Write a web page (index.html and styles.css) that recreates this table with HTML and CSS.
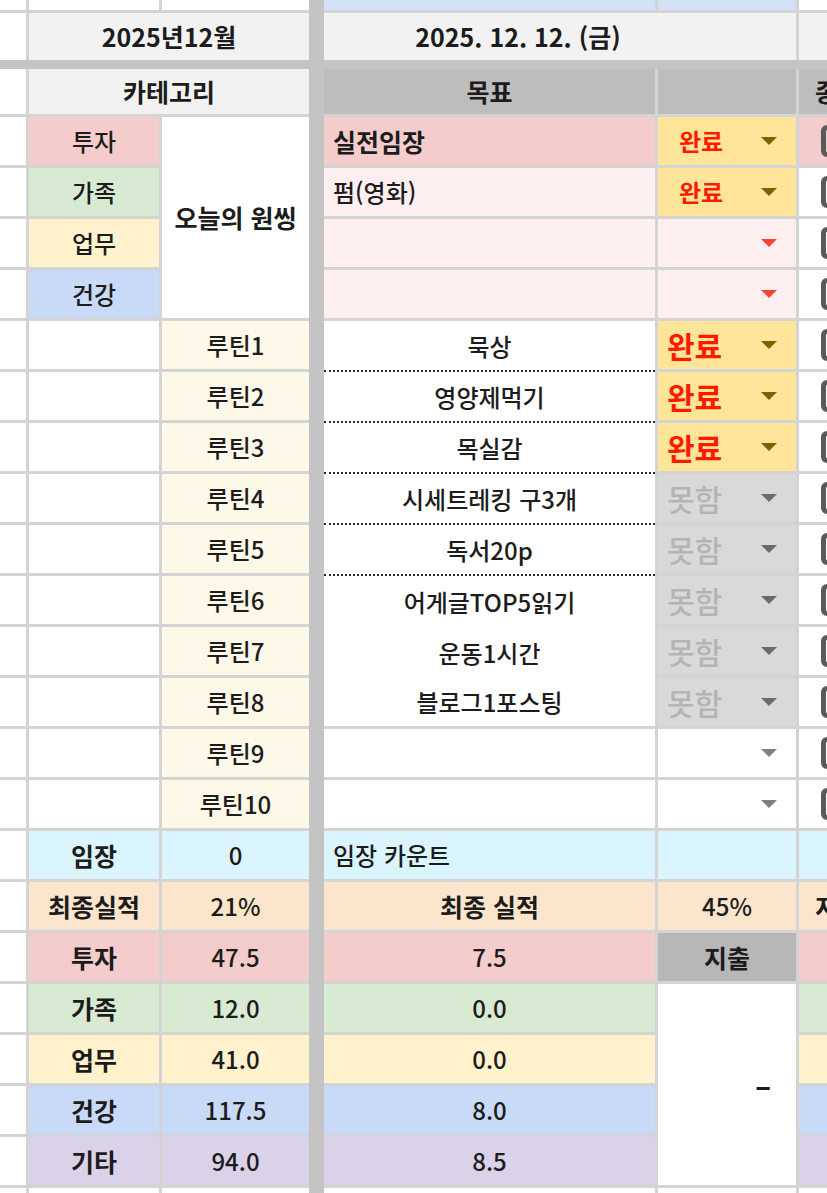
FILE: index.html
```html
<!DOCTYPE html>
<html lang="ko">
<head>
<meta charset="utf-8">
<title>루틴 시트</title>
<link rel="stylesheet" href="styles.css">
</head>
<body>
<div class="sheet">
  <div class="sep"></div>
  <div class="bar"></div>

  <!-- top partial row -->
  <div class="c"></div><div class="c"></div><div class="c"></div>
  <div class="c lblue"></div><div class="c lblue"></div><div class="c"></div>

  <!-- month / date -->
  <div class="c"></div>
  <div class="c hdr span2 b">2025년12월</div>
  <div class="c hdr span2 b date">2025. 12. 12. (금)</div>
  <div class="c hdr"></div>

  <!-- header -->
  <div class="c"></div>
  <div class="c hdr span2 b">카테고리</div>
  <div class="c gray b">목표</div>
  <div class="c gray"></div>
  <div class="c gray b cut">종합</div>

  <!-- one thing -->
  <div class="c"></div>
  <div class="c pink">투자</div>
  <div class="c onething b">오늘의 원씽</div>
  <div class="c pink left b">실전임장</div>
  <div class="c st yel"><span class="done sm">완료</span><span class="arr brown"></span></div>
  <div class="c pink cbcell"><span class="cb"></span></div>

  <div class="c"></div>
  <div class="c green">가족</div>
  <div class="c lpink left">펌(영화)</div>
  <div class="c st yel"><span class="done sm">완료</span><span class="arr brown"></span></div>
  <div class="c cbcell"><span class="cb"></span></div>

  <div class="c"></div>
  <div class="c yellow">업무</div>
  <div class="c lpink"></div>
  <div class="c st lpink empty"><span class="arr red"></span></div>
  <div class="c cbcell"><span class="cb"></span></div>

  <div class="c"></div>
  <div class="c blue">건강</div>
  <div class="c lpink"></div>
  <div class="c st lpink empty"><span class="arr red"></span></div>
  <div class="c cbcell"><span class="cb"></span></div>

  <!-- routines -->
  <div class="c"></div><div class="c"></div>
  <div class="c cream">루틴1</div>
  <div class="c dot">묵상</div>
  <div class="c st yel big"><span class="done">완료</span><span class="arr brown"></span></div>
  <div class="c cbcell"><span class="cb"></span></div>

  <div class="c"></div><div class="c"></div>
  <div class="c cream">루틴2</div>
  <div class="c dot">영양제먹기</div>
  <div class="c st yel big"><span class="done">완료</span><span class="arr brown"></span></div>
  <div class="c cbcell"><span class="cb"></span></div>

  <div class="c"></div><div class="c"></div>
  <div class="c cream">루틴3</div>
  <div class="c dot">목실감</div>
  <div class="c st yel big"><span class="done">완료</span><span class="arr brown"></span></div>
  <div class="c cbcell"><span class="cb"></span></div>

  <div class="c"></div><div class="c"></div>
  <div class="c cream">루틴4</div>
  <div class="c dot">시세트레킹 구3개</div>
  <div class="c st lgray big"><span class="fail">못함</span><span class="arr dgray"></span></div>
  <div class="c cbcell"><span class="cb"></span></div>

  <div class="c"></div><div class="c"></div>
  <div class="c cream">루틴5</div>
  <div class="c dot">독서20p</div>
  <div class="c st lgray big"><span class="fail">못함</span><span class="arr dgray"></span></div>
  <div class="c cbcell"><span class="cb"></span></div>

  <div class="c"></div><div class="c"></div>
  <div class="c cream">루틴6</div>
  <div class="c join">어게글TOP5읽기</div>
  <div class="c st lgray big"><span class="fail">못함</span><span class="arr dgray"></span></div>
  <div class="c cbcell"><span class="cb"></span></div>

  <div class="c"></div><div class="c"></div>
  <div class="c cream">루틴7</div>
  <div class="c join">운동1시간</div>
  <div class="c st lgray big"><span class="fail">못함</span><span class="arr dgray"></span></div>
  <div class="c cbcell"><span class="cb"></span></div>

  <div class="c"></div><div class="c"></div>
  <div class="c cream">루틴8</div>
  <div class="c">블로그1포스팅</div>
  <div class="c st lgray big"><span class="fail">못함</span><span class="arr dgray"></span></div>
  <div class="c cbcell"><span class="cb"></span></div>

  <div class="c"></div><div class="c"></div>
  <div class="c cream">루틴9</div>
  <div class="c"></div>
  <div class="c st empty"><span class="arr mgray"></span></div>
  <div class="c cbcell"><span class="cb"></span></div>

  <div class="c"></div><div class="c"></div>
  <div class="c cream">루틴10</div>
  <div class="c"></div>
  <div class="c st empty"><span class="arr mgray"></span></div>
  <div class="c cbcell"><span class="cb"></span></div>

  <!-- summary -->
  <div class="c"></div>
  <div class="c cyan b">임장</div>
  <div class="c cyan">0</div>
  <div class="c cyan left">임장 카운트</div>
  <div class="c cyan"></div>
  <div class="c cyan"></div>

  <div class="c"></div>
  <div class="c orange b">최종실적</div>
  <div class="c orange">21%</div>
  <div class="c orange b">최종 실적</div>
  <div class="c orange">45%</div>
  <div class="c orange b cut">지출</div>

  <div class="c"></div>
  <div class="c pink b">투자</div>
  <div class="c pink">47.5</div>
  <div class="c pink">7.5</div>
  <div class="c spend b">지출</div>
  <div class="c pink"></div>

  <div class="c"></div>
  <div class="c green b">가족</div>
  <div class="c green">12.0</div>
  <div class="c green">0.0</div>
  <div class="c dash"><span class="dash-t">-</span></div>
  <div class="c green"></div>

  <div class="c"></div>
  <div class="c yellow b">업무</div>
  <div class="c yellow">41.0</div>
  <div class="c yellow">0.0</div>
  <div class="c yellow"></div>

  <div class="c"></div>
  <div class="c blue b">건강</div>
  <div class="c blue">117.5</div>
  <div class="c blue">8.0</div>
  <div class="c blue"></div>

  <div class="c"></div>
  <div class="c purple b">기타</div>
  <div class="c purple">94.0</div>
  <div class="c purple">8.5</div>
  <div class="c purple"></div>

  <!-- bottom partial row -->
  <div class="c"></div><div class="c"></div><div class="c"></div>
  <div class="c"></div><div class="c"></div><div class="c"></div>
</div>
</body>
</html>
```

FILE: styles.css
```css
html, body {
  margin: 0;
  padding: 0;
  background: #ffffff;
  overflow: hidden;
}

body {
  width: 827px;
  height: 1193px;
  font-family: "Noto Sans CJK KR", "Noto Sans", sans-serif;
  color: #1c1c1c;
}

.sheet {
  display: grid;
  grid-template-columns: 26px 130px 147px 9px 331px 138px 100px;
  grid-template-rows: 10px 47px 3px 45px repeat(21, 48px) 30px;
  gap: 3px;
  background: #d4d4d4;
  width: max-content;
  font-size: 24px;
  font-weight: 500;
  line-height: 1;
}

.sep {
  grid-column: 4;
  grid-row: 1 / -1;
  margin: 0 -3px;
  background: #c4c4c4;
}

.bar {
  grid-column: 1 / -1;
  grid-row: 3;
  margin: -3px 0;
  background: #c4c4c4;
}

.c {
  background: #ffffff;
  display: flex;
  align-items: center;
  justify-content: center;
  white-space: nowrap;
  overflow: hidden;
}

.b {
  font-weight: 700;
  font-size: 25px;
}

.span2 { grid-column: span 2; }

.left {
  justify-content: flex-start;
  padding-left: 9px;
}

.date { padding-right: 84px; }

.cut {
  justify-content: flex-start;
  padding-left: 16px;
}

.hdr { background: #f2f2f2; }
.gray { background: #bdbdbd; }
.lblue { background: #d3e1f7; }
.pink { background: #f4cccc; }
.lpink { background: #fdeff0; }
.green { background: #d9ead3; }
.yellow { background: #fff2cc; }
.blue { background: #c9daf8; }
.purple { background: #d9d2e9; }
.cyan { background: #daf5fd; }
.orange { background: #fce5cd; }
.cream { background: #fef8e8; }
.yel { background: #ffe599; }
.lgray { background: #d9d9d9; }
.spend { background: #b7b7b7; }

.onething {
  grid-row: span 4;
}

.dash {
  grid-row: span 4;
  justify-content: flex-end;
  padding-right: 28px;
  padding-top: 4px;
  font-size: 28px;
  font-weight: 700;
}

.dash-t {
  display: inline-block;
  transform: scaleX(1.7);
}

/* routine text cells */
.dot {
  margin-bottom: -3px;
  border-bottom: 2px dotted #2a2a2a;
}

.join {
  margin-bottom: -3px;
}

/* status dropdown cells */
.st {
  justify-content: space-between;
  padding: 0 19px 0 21px;
}

.st.big { padding-left: 9px; }

.st.empty { justify-content: flex-end; }

.done {
  color: #ff1a00;
  font-weight: 700;
  font-size: 30px;
}

.done.sm { font-size: 24px; }

.fail {
  color: #b4b4b4;
  font-size: 30px;
}

.arr {
  width: 0;
  height: 0;
  border-left: 8px solid transparent;
  border-right: 8px solid transparent;
  border-top: 8px solid #777777;
}

.arr.brown { border-top-color: #7f6000; }
.arr.red { border-top-color: #ff4236; }
.arr.dgray { border-top-color: #6b6b6b; }
.arr.mgray { border-top-color: #808080; }

/* checkbox column */
.cbcell {
  justify-content: flex-start;
  padding-left: 22px;
}

.cb {
  box-sizing: border-box;
  width: 32px;
  height: 32px;
  border: 5px solid #5a5a5a;
  border-radius: 6px;
  flex: none;
}
```
